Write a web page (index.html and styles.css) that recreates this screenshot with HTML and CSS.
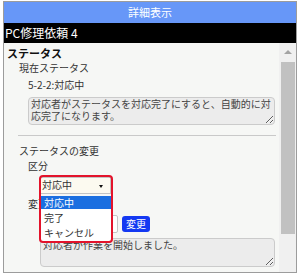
FILE: index.html
```html
<!DOCTYPE html>
<html lang="ja">
<head>
<meta charset="utf-8">
<title>詳細表示</title>
<link rel="stylesheet" href="styles.css">
</head>
<body>
<div class="window">
  <div class="titlebar">詳細表示</div>
  <div class="headline">PC修理依頼 4</div>
  <div class="body">
    <div class="scroll">
      <div class="sec">ステータス</div>
      <div class="lbl">現在ステータス</div>
      <div class="val">5-2-2:対応中</div>
      <textarea class="note note1" readonly>対応者がステータスを対応完了にすると、自動的に対応完了になります。</textarea>
      <div class="rule"></div>
      <div class="lbl lbl2">ステータスの変更</div>
      <div class="sub">区分</div>
      <div class="select"><span>対応中</span><i class="caret"></i></div>
      <div class="sub sub2">変更内容</div>
      <div class="row">
        <div class="input"></div>
        <button class="btn">変更</button>
      </div>
      <textarea class="note note2" readonly>対応者が作業を開始しました。</textarea>

      <div class="dropdown">
        <div class="opt sel">対応中</div>
        <div class="opt">完了</div>
        <div class="opt">キャンセル</div>
      </div>
      <div class="mark"></div>
    </div>
    <div class="scrollbar">
      <div class="arrow"><i></i></div>
      <div class="thumb"></div>
    </div>
  </div>
</div>
</body>
</html>
```

FILE: styles.css
```css
* { box-sizing: border-box; }
html, body { margin: 0; padding: 0; background: #fff; }
body {
  font-family: "Noto Sans CJK JP", "Noto Sans", sans-serif;
  font-size: 10px;
  color: #333;
}
.window {
  margin: 1px 0 0 3px;
  width: 294px;
  height: 272px;
  border: 1px solid #9c9c9c;
  display: flex;
  flex-direction: column;
  background: #f6f7f5;
}
.titlebar {
  height: 21px;
  background: #6797f8;
  color: #fff;
  font-size: 11px;
  line-height: 21px;
  text-align: center;
}
.headline {
  height: 20px;
  background: #000;
  color: #fff;
  font-size: 12px;
  line-height: 20px;
  padding-left: 1px;
}
.body {
  flex: 1;
  display: flex;
  min-height: 0;
}
.scroll {
  position: relative;
  flex: 1;
  overflow: hidden;
  padding: 0 4px 0 3px;
  display: flex;
  flex-direction: column;
  align-items: flex-start;
}
.sec {
  margin-top: 3px;
  font-size: 11px;
  font-weight: bold;
  line-height: 14px;
  color: #111;
}
.lbl { margin: 1px 0 0 12px; line-height: 14px; }
.lbl2 { margin-top: 8px; }
.val { margin: 3px 0 0 21px; line-height: 14px; }
.sub { margin: 1px 0 0 21px; line-height: 14px; }
.sub2 { margin-top: 3px; }
.note {
  display: block;
  resize: both;
  overflow: hidden;
  font-family: inherit;
  font-size: 10px;
  line-height: 12px;
  color: #444;
  background: #ececec;
  border: 1px solid #cbcbcb;
  border-radius: 4px;
  padding: 0 1px 0 2px;
  margin: 0;
  align-self: stretch;
}
.note1 { margin: 5px 0 0 21px; height: 28px; }
.note2 { margin: 5px 0 0 33px; height: 29px; }
.rule {
  align-self: stretch;
  height: 1px;
  background: #c9c9c9;
  margin: 10px -1px 0 11px;
}
.select {
  margin: 4px 0 0 33px;
  width: 71px;
  height: 17px;
  border: 1px solid #c4c4c4;
  background: #fcfaf0;
  line-height: 14px;
  padding-left: 1px;
  display: flex;
  align-items: flex-start;
  position: relative;
}
.caret {
  position: absolute;
  left: 58px;
  top: 7px;
  width: 0; height: 0;
  border-left: 2.5px solid transparent;
  border-right: 2.5px solid transparent;
  border-top: 3px solid #111;
}
.row {
  margin: 4px 0 0 33px;
  display: flex;
  gap: 4px;
  align-items: flex-start;
}
.input {
  width: 78px;
  height: 18px;
  background: #fff;
  border: 1px solid #c4c4c4;
  border-radius: 2px;
}
.btn {
  margin-top: 1px;
  width: 28px;
  height: 16px;
  border: none;
  border-radius: 3px;
  background: #1439f2;
  color: #fff;
  font-family: inherit;
  font-size: 10px;
  line-height: 16px;
  padding: 0;
}
.dropdown {
  position: absolute;
  left: 37px;
  top: 153px;
  width: 71px;
  height: 46px;
  background: #fff;
}
.opt {
  height: 15px;
  line-height: 14px;
  padding-left: 3px;
  color: #333;
}
.opt.sel {
  height: 13px;
  line-height: 13px;
  margin-bottom: 2px;
  background: #1b6fe0;
  color: #fff;
}
.mark {
  position: absolute;
  left: 35px;
  top: 132px;
  width: 74px;
  height: 68px;
  border: 2px solid #e3132b;
  border-radius: 4px;
  pointer-events: none;
}
.scrollbar {
  width: 17px;
  background: #f0f0f0;
  display: flex;
  flex-direction: column;
  align-items: center;
}
.arrow {
  height: 18px;
  width: 17px;
  display: flex;
  align-items: center;
  justify-content: center;
}
.arrow i {
  width: 0; height: 0;
  border-left: 4px solid transparent;
  border-right: 4px solid transparent;
  border-bottom: 4px solid #a3a3a3;
}
.thumb {
  margin-top: 1px;
  width: 14px;
  height: 172px;
  background: #c1c1c1;
}
```
